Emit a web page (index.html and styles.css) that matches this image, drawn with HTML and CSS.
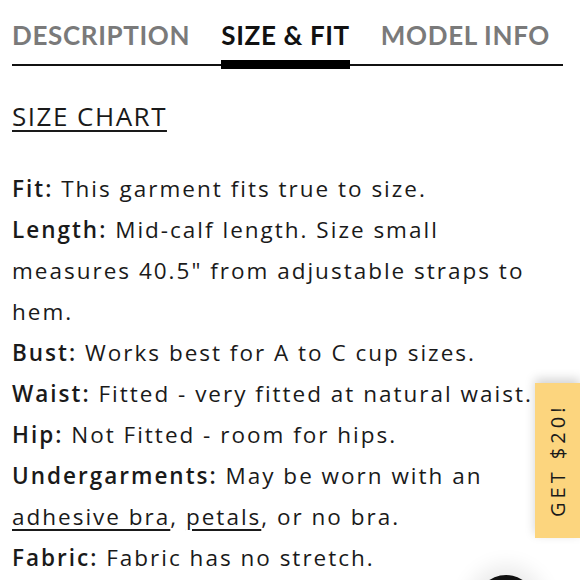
FILE: index.html
```html
<!DOCTYPE html>
<html>
<head>
<meta charset="utf-8">
<link rel="stylesheet" href="styles.css">
</head>
<body>
<div class="page">
  <nav class="tabs">
    <span class="tab">DESCRIPTION</span>
    <span class="tab active">SIZE &amp; FIT</span>
    <span class="tab">MODEL INFO</span>
  </nav>
  <a class="chart-link">SIZE CHART</a>
  <div class="details">
    <p><b>Fit:</b> This garment fits true to size.</p>
    <p><b>Length:</b> Mid-calf length. Size small<br>measures 40.5" from adjustable straps to hem.</p>
    <p><b>Bust:</b> Works best for A to C cup sizes.</p>
    <p><b>Waist:</b> Fitted - very fitted at natural waist.</p>
    <p><b>Hip:</b> Not Fitted - room for hips.</p>
    <p><b>Undergarments:</b> May be worn with an <u>adhesive bra</u>, <u>petals</u>, or no bra.</p>
    <p><b>Fabric:</b> Fabric has no stretch.</p>
  </div>
</div>
<div class="promo">GET $20!</div>
<div class="chat"></div>
</body>
</html>
```
FILE: styles.css
```css
html, body {
  margin: 0;
  padding: 0;
  background: #fff;
  overflow: hidden;
}
body {
  width: 580px;
  height: 580px;
  font-family: "Open Sans", Lato, sans-serif;
  color: #1a1a1a;
}
.page {
  padding: 15px 17px 0 12px;
}
.tabs {
  display: flex;
  align-items: flex-end;
  gap: 31px;
  border-bottom: 2px solid #111;
  height: 49px;
  font-family: Lato, sans-serif;
}
.tab {
  font-size: 26px;
  font-weight: 700;
  letter-spacing: 0.65px;
  color: #7a7a7a;
  line-height: 32px;
  padding-bottom: 13px;
}
.tab.active {
  color: #111;
  border-bottom: 9px solid #000;
  margin-bottom: -5px;
  padding-bottom: 9px;
}
.chart-link {
  display: inline-block;
  margin-top: 34px;
  font-size: 26px;
  letter-spacing: 1.5px;
  color: #1a1a1a;
  text-decoration: underline;
  text-underline-offset: 4px;
  text-decoration-thickness: 2px;
  line-height: 32px;
}
.details {
  margin-top: 36px;
  font-size: 22.5px;
  letter-spacing: 2px;
  line-height: 41px;
}
.details p {
  margin: 0;
}
.details b {
  font-weight: 600;
}
.details u {
  text-underline-offset: 4px;
}
.promo {
  position: absolute;
  left: 535px;
  top: 383px;
  width: 45px;
  height: 155px;
  background: #fcd57e;
  box-shadow: 0 4px 10px rgba(0,0,0,0.18);
  writing-mode: vertical-rl;
  transform: rotate(180deg);
  display: flex;
  align-items: center;
  justify-content: center;
  font-size: 20px;
  letter-spacing: 4px;
  color: #1a1a1a;
  font-weight: 400;
}
.chat {
  position: absolute;
  left: 476px;
  top: 575px;
  width: 60px;
  height: 60px;
  border-radius: 50%;
  background: #111;
  box-shadow: 0 0 20px 10px rgba(0,0,0,0.08);
}
```
